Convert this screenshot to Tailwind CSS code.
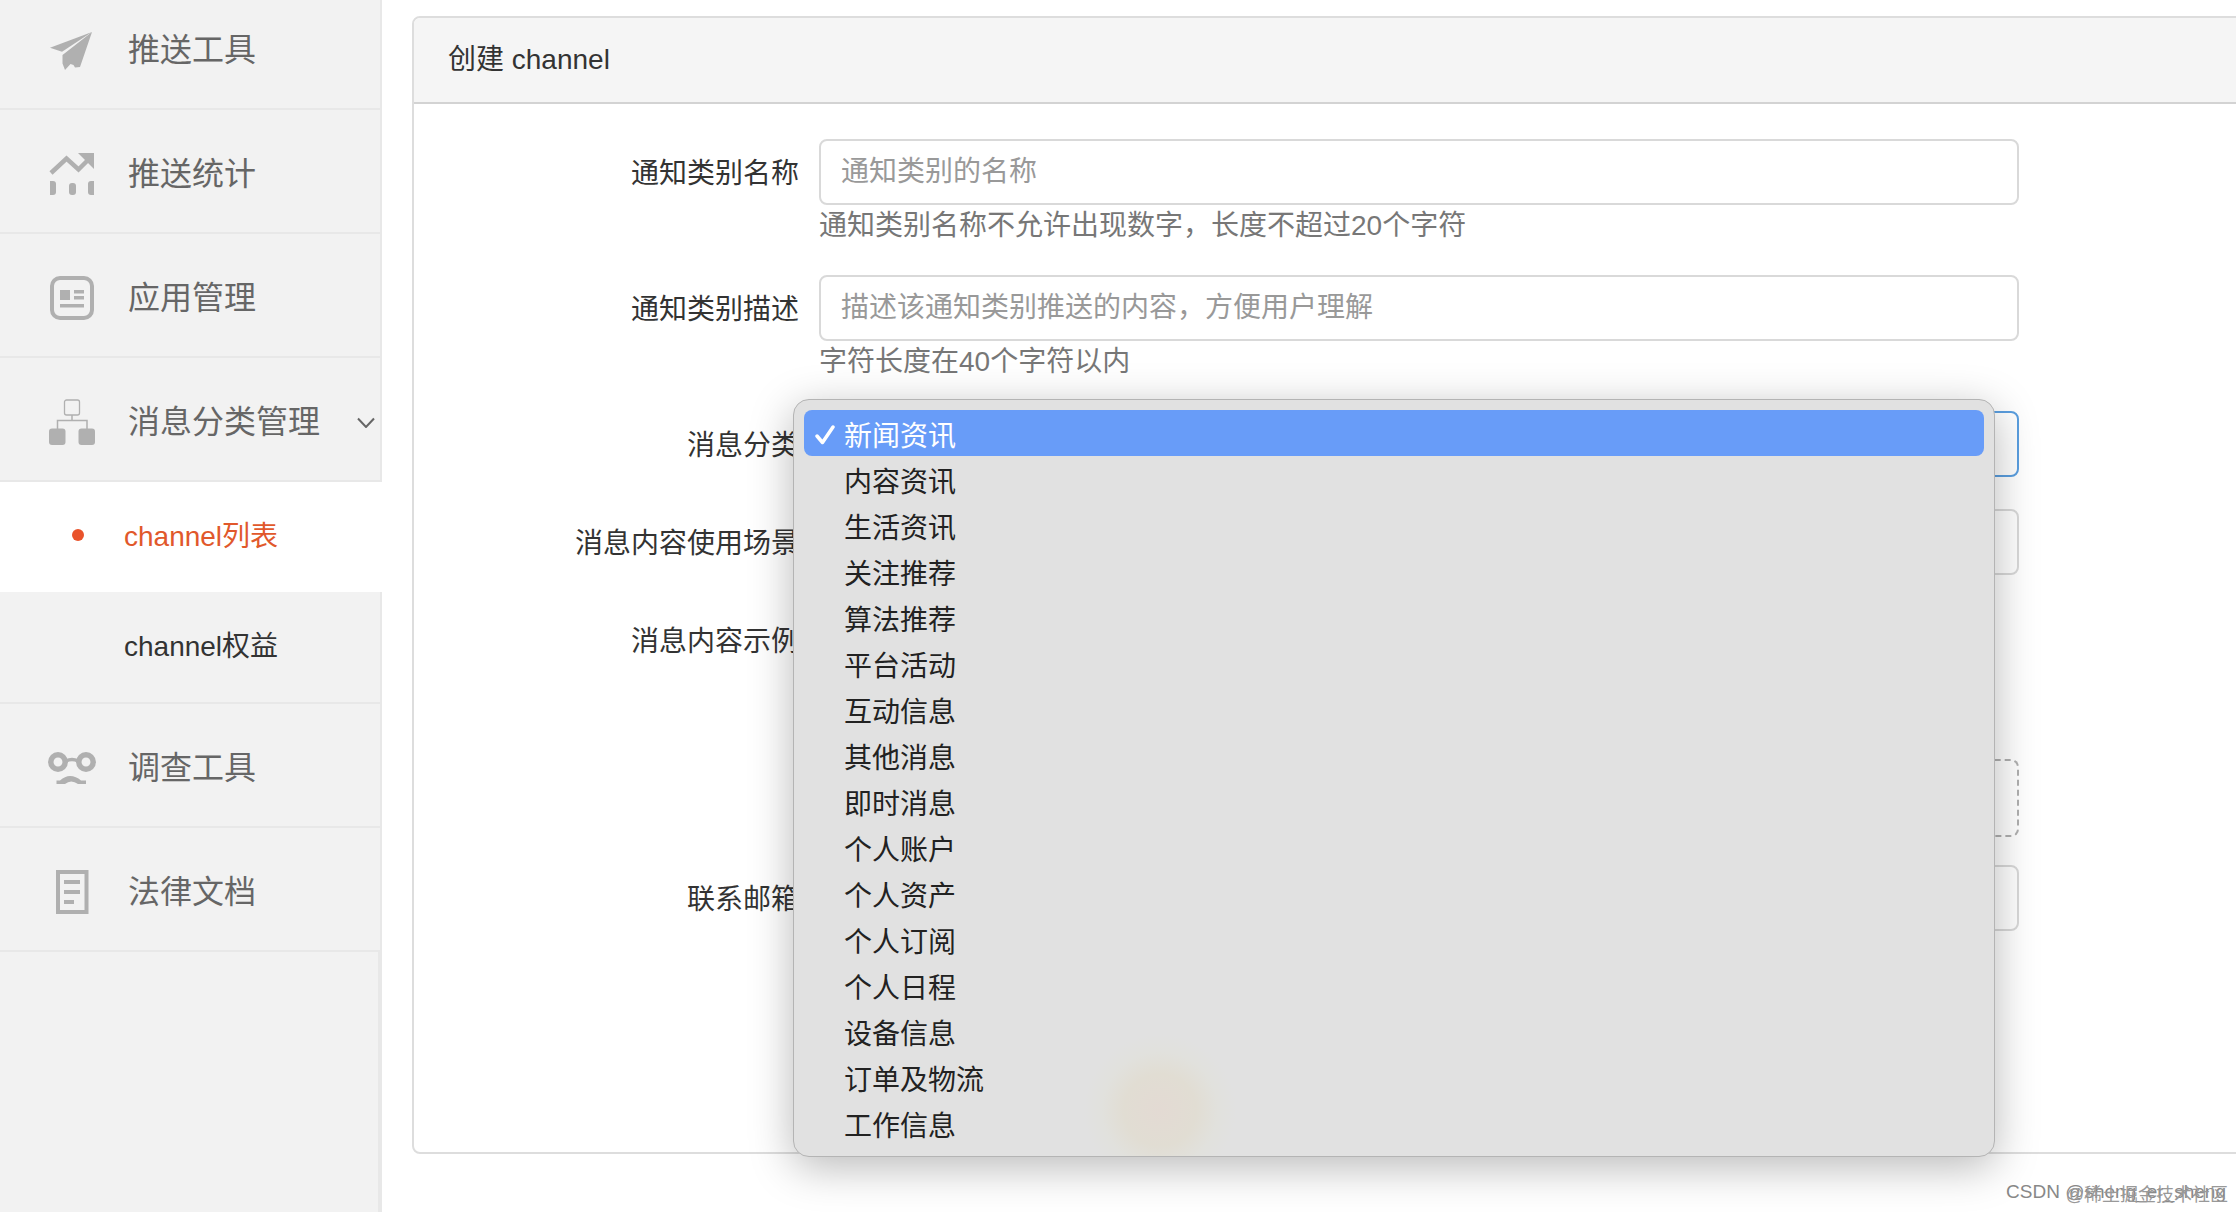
<!DOCTYPE html>
<html lang="zh-CN">
<head>
  <meta charset="UTF-8">
  <meta name="viewport" content="width=device-width, initial-scale=1.0">
  <script src="https://cdn.jsdelivr.net/npm/@tailwindcss/browser@4"></script>
  <title>创建 channel</title>
</head>
<body class="bg-white font-['Liberation_Sans','Noto_Sans_CJK_SC',sans-serif] text-[28px] leading-10 text-[#333]">
  <div class="relative flex min-h-screen overflow-hidden">

    <!-- Sidebar -->
    <nav class="-mt-[14px] w-[382px] shrink-0 bg-[#f2f2f2] text-[32px] text-[#666]">
      <a href="#" class="flex h-[124px] items-center gap-8 border-r-2 border-b-2 border-[#e8e8e8] pt-[6px] pl-12">
        <svg class="size-12" viewBox="0 0 48 48" fill="#b0b0b0">
          <path d="M44 6 2 21.700l12 4z"/>
          <path d="M44 6 14.500 29v8.500L17 44l5.500-6 3 1 1.500 2.500 5-.500z"/>
        </svg>
        <span>推送工具</span>
      </a>
      <a href="#" class="flex h-[124px] items-center gap-8 border-r-2 border-b-2 border-[#e8e8e8] pt-[6px] pl-12">
        <svg class="size-12" viewBox="0 0 48 48" fill="#b0b0b0">
          <path d="M3 23 18.500 8.500l12 11L42 8" fill="none" stroke="#b0b0b0" stroke-width="4.500"/>
          <path d="M30 3h16v16z"/>
          <path d="M2 31h3q3 0 3 3v8q0 3-3 3H2zM46 31h-3q-3 0-3 3v8q0 3 3 3h3z"/>
          <rect x="21" y="33" width="7" height="12" rx="3"/>
        </svg>
        <span>推送统计</span>
      </a>
      <a href="#" class="flex h-[124px] items-center gap-8 border-r-2 border-b-2 border-[#e8e8e8] pt-[6px] pl-12">
        <svg class="size-12" viewBox="0 0 48 48" fill="#b0b0b0">
          <rect x="4" y="4" width="40" height="40" rx="8" fill="none" stroke="#b0b0b0" stroke-width="4"/>
          <path d="M12 16h10v10H12zM26 16h10v3.500H26zM26 22h10v3.500H26zM12 30h24v3.500H12z"/>
        </svg>
        <span>应用管理</span>
      </a>
      <a href="#" class="flex h-[124px] items-center gap-8 border-r-2 border-b-2 border-[#e8e8e8] pt-[6px] pr-1 pl-12">
        <svg class="size-12" viewBox="0 0 48 48" fill="#b0b0b0">
          <rect x="16.500" y="2" width="15" height="15" rx="2" fill="none" stroke="#b0b0b0" stroke-width="1.300"/>
          <path d="M24 17v5.500M9.500 31v-8.500h29.500V31" fill="none" stroke="#b0b0b0" stroke-width="1.500"/>
          <rect x="1" y="30.500" width="16.500" height="16.500" rx="3"/>
          <rect x="30.500" y="30.500" width="16.500" height="16.500" rx="3"/>
        </svg>
        <span>消息分类管理</span>
        <svg class="ml-auto h-3 w-5" viewBox="0 0 20 12" fill="none" stroke="#666" stroke-width="2">
          <path d="M2 2.500 10 11l8-8.500"/>
        </svg>
      </a>

      <a href="#" class="flex h-[110px] items-center bg-white pl-[72px] text-[28px] text-[#e1582b]">
        <span class="mr-10 mb-1 size-3 rounded-full bg-[#e9532b]"></span>
        <span>channel列表</span>
      </a>
      <a href="#" class="flex h-[112px] items-center border-r-2 border-b-2 border-[#e8e8e8] pl-[124px] text-[28px] text-[#333]">channel权益</a>

      <a href="#" class="flex h-[124px] items-center gap-8 border-r-2 border-b-2 border-[#e8e8e8] pt-[6px] pl-12">
        <svg class="size-12" viewBox="0 0 48 48" fill="none" stroke="#b0b0b0">
          <circle cx="10" cy="18" r="7.200" stroke-width="5.500"/>
          <circle cx="38" cy="18" r="7.200" stroke-width="5.500"/>
          <path d="M18 17q6-3 12 0" stroke-width="3.500"/>
          <path d="M8.500 40v-3.500h3.500Q17 32 22 32q6 0 11 4.500h5V40h-8q-7-5-13 0z" fill="#b0b0b0" stroke="none"/>
        </svg>
        <span>调查工具</span>
      </a>
      <a href="#" class="flex h-[124px] items-center gap-8 border-r-2 border-b-2 border-[#e8e8e8] pt-[6px] pl-12">
        <svg class="size-12" viewBox="0 0 48 48" fill="none" stroke="#b0b0b0" stroke-width="4">
          <path d="M10 4h28.500v40H10z"/>
          <path d="M16 14h16M16 24h16M16 34h10"/>
        </svg>
        <span>法律文档</span>
      </a>
      <div class="h-[260px] border-r-4 border-[#e8e8e8]"></div>
    </nav>

    <!-- Form panel, runs past the right edge of the window -->
    <main class="-mr-4 min-w-0 flex-1 pt-4 pl-[30px]">
      <section class="rounded-lg border-2 border-[#ddd]">
        <h1 class="flex h-[86px] items-center rounded-t-md border-b-2 border-[#d3d3d3] bg-[#f5f5f5] pl-[34px]">创建 channel</h1>
        <form class="flex h-[1048px] flex-col pt-[35px] pl-[30px]">

          <div class="mb-7 flex gap-5">
            <label for="name" class="h-[66px] w-[355px] shrink-0 pt-[2px] text-right leading-[66px]">通知类别名称</label>
            <div class="w-full max-w-[1200px]">
              <input id="name" type="text" placeholder="通知类别的名称" class="block h-[66px] w-full rounded-lg border-2 border-[#d9d9d9] bg-white px-5 placeholder:text-[#999]">
              <p class="leading-[42px] text-[#777]">通知类别名称不允许出现数字，长度不超过20个字符</p>
            </div>
          </div>

          <div class="mb-7 flex gap-5">
            <label for="desc" class="h-[66px] w-[355px] shrink-0 pt-[2px] text-right leading-[66px]">通知类别描述</label>
            <div class="w-full max-w-[1200px]">
              <input id="desc" type="text" placeholder="描述该通知类别推送的内容，方便用户理解" class="block h-[66px] w-full rounded-lg border-2 border-[#d9d9d9] bg-white px-5 placeholder:text-[#999]">
              <p class="leading-[42px] text-[#777]">字符长度在40个字符以内</p>
            </div>
          </div>

          <div class="mb-8 flex gap-5">
            <label for="category" class="h-[66px] w-[355px] shrink-0 pt-[2px] text-right leading-[66px]">消息分类</label>
            <div class="relative w-full max-w-[1200px]">
              <select id="category" class="block h-[66px] w-full appearance-none rounded-lg border-2 border-[#5b9fe0] bg-white px-5">
                <option>新闻资讯</option>
              </select>

              <!-- Open option list -->
              <ul role="listbox" aria-label="消息分类" class="absolute -top-3 right-6 -left-[26px] z-10 rounded-2xl border border-[#b4b4b4] bg-[#e1e1e1] bg-[radial-gradient(circle_at_366px_710px,#e3dad3_0px,#e1ddd3_36px,#e1e1dd_58px,#e1e1e1_76px)] p-[10px] text-[#222] shadow-[0_10px_44px_rgba(0,0,0,0.28)]">
                <li role="option" aria-selected="true" class="flex h-[46px] items-center rounded-lg bg-[#689cf8] pt-2 pl-[11px] text-white">
                  <svg class="mr-[9px] mb-1 size-5" viewBox="0 0 20 20" fill="none" stroke="white" stroke-width="3.500" stroke-linecap="round" stroke-linejoin="round"><path d="M2 11l5.500 6.500L18 2"/></svg>新闻资讯
                </li>
                <li role="option" class="flex h-[46px] items-center pt-2 pl-10">内容资讯</li>
                <li role="option" class="flex h-[46px] items-center pt-2 pl-10">生活资讯</li>
                <li role="option" class="flex h-[46px] items-center pt-2 pl-10">关注推荐</li>
                <li role="option" class="flex h-[46px] items-center pt-2 pl-10">算法推荐</li>
                <li role="option" class="flex h-[46px] items-center pt-2 pl-10">平台活动</li>
                <li role="option" class="flex h-[46px] items-center pt-2 pl-10">互动信息</li>
                <li role="option" class="flex h-[46px] items-center pt-2 pl-10">其他消息</li>
                <li role="option" class="flex h-[46px] items-center pt-2 pl-10">即时消息</li>
                <li role="option" class="flex h-[46px] items-center pt-2 pl-10">个人账户</li>
                <li role="option" class="flex h-[46px] items-center pt-2 pl-10">个人资产</li>
                <li role="option" class="flex h-[46px] items-center pt-2 pl-10">个人订阅</li>
                <li role="option" class="flex h-[46px] items-center pt-2 pl-10">个人日程</li>
                <li role="option" class="flex h-[46px] items-center pt-2 pl-10">设备信息</li>
                <li role="option" class="flex h-[46px] items-center pt-2 pl-10">订单及物流</li>
                <li role="option" class="flex h-[46px] items-center pt-2 pl-10">工作信息</li>
              </ul>
            </div>
          </div>

          <div class="mb-8 flex gap-5">
            <label for="scene" class="h-[66px] w-[355px] shrink-0 pt-[2px] text-right leading-[66px]">消息内容使用场景</label>
            <div class="w-full max-w-[1200px]">
              <input id="scene" type="text" class="block h-[66px] w-full rounded-lg border-2 border-[#d9d9d9] bg-white px-5">
            </div>
          </div>

          <div class="mb-7 flex gap-5">
            <label for="sample" class="h-[66px] w-[355px] shrink-0 pt-[2px] text-right leading-[66px]">消息内容示例</label>
            <div class="w-full max-w-[1200px] pt-[152px]">
              <button id="sample" type="button" class="block h-[78px] w-full rounded-lg border-2 border-dashed border-[#b0b0b0]"></button>
            </div>
          </div>

          <div class="flex gap-5">
            <label for="email" class="h-[66px] w-[355px] shrink-0 pt-[2px] text-right leading-[66px]">联系邮箱</label>
            <div class="w-full max-w-[1200px]">
              <input id="email" type="email" class="block h-[66px] w-full rounded-lg border-2 border-[#d9d9d9] bg-white px-5">
            </div>
          </div>
        </form>
      </section>
    </main>

    <!-- Watermarks -->
    <span class="absolute right-[10px] bottom-[8px] text-[19px] leading-6 text-[#888]">CSDN @sheng_er_sheng</span>
    <span class="absolute right-[8px] bottom-[5px] text-[18px] leading-6 text-[#999]">@稀土掘金技术社区</span>
  </div>
</body>
</html>
